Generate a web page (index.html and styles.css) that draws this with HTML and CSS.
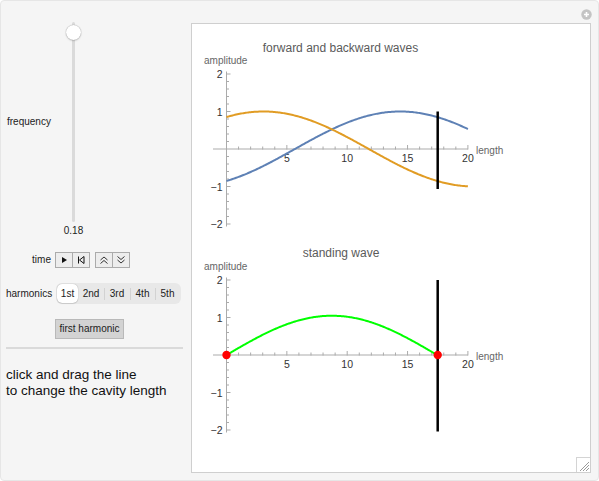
FILE: index.html
```html
<!DOCTYPE html>
<html>
<head>
<meta charset="utf-8">
<title>Standing waves</title>
<link rel="stylesheet" href="styles.css">
</head>
<body>
<div class="app">
  <div class="controls">
    <div class="slider-block">
      <div class="slider-label">frequency</div>
      <div class="track"><div class="thumb"></div></div>
      <div class="slider-value">0.18</div>
    </div>

    <div class="ctl-row time-row">
      <span class="ctl-label">time</span>
      <div class="btns">
        <div class="btn-group">
          <span class="tbtn"><svg width="16" height="14" viewBox="0 0 16 14"><polygon points="6,4 6,10 11,7" fill="#111"/></svg></span>
          <span class="tbtn"><svg width="16" height="14" viewBox="0 0 16 14"><line x1="5.5" y1="3.5" x2="5.5" y2="10.5" stroke="#111" stroke-width="1"/><polygon points="11,3.5 6.5,7 11,10.5" fill="none" stroke="#111" stroke-width="1"/></svg></span>
        </div>
        <div class="btn-group">
          <span class="tbtn"><svg width="16" height="14" viewBox="0 0 16 14"><polyline points="4.5,7 8,4 11.5,7" fill="none" stroke="#333" stroke-width="1"/><polyline points="4.5,10.5 8,7.5 11.5,10.5" fill="none" stroke="#333" stroke-width="1"/></svg></span>
          <span class="tbtn"><svg width="16" height="14" viewBox="0 0 16 14"><polyline points="4.5,3.5 8,6.5 11.5,3.5" fill="none" stroke="#333" stroke-width="1"/><polyline points="4.5,7 8,10 11.5,7" fill="none" stroke="#333" stroke-width="1"/></svg></span>
        </div>
      </div>
    </div>

    <div class="ctl-row harm-row">
      <span class="ctl-label">harmonics</span>
      <div class="seg">
        <span class="seg-item active w21">1st</span>
        <span class="seg-item w26">2nd</span>
        <span class="seg-item sepl w26">3rd</span>
        <span class="seg-item sepl w25">4th</span>
        <span class="seg-item sepl w25">5th</span>
      </div>
    </div>

    <div class="action-row"><span class="action">first harmonic</span></div>

    <div class="sep"></div>

    <p class="hint">click and drag the line<br>to change the cavity length</p>
  </div>

  <div class="plot-panel">
    <svg class="plot" width="398" height="448" viewBox="0 0 398 448">
      <!-- top plot -->
      <text class="title" x="148.5" y="23.5">forward and backward waves</text>
      <text class="axlabel" x="12" y="36">amplitude</text>
      <line class="axis" x1="21" y1="125" x2="276" y2="125"/>
      <line class="axis" x1="34.5" y1="47.5" x2="34.5" y2="202.5"/>
      <path id="ticks1" class="axis" d=""/>
      <text class="ylab" x="30.5" y="50">2</text>
      <text class="ylab" x="30.5" y="87.5">1</text>
      <text class="ylab" x="30.5" y="162.5">−1</text>
      <text class="ylab" x="30.5" y="200">−2</text>
      <text class="xlab" x="94.85" y="134">5</text>
      <text class="xlab" x="155.2" y="134">10</text>
      <text class="xlab" x="215.55" y="134">15</text>
      <text class="xlab" x="275.9" y="134">20</text>
      <text class="axlabel mid" x="284" y="126.5">length</text>
      <path id="blue" class="curve" stroke="#5e81b5" d=""/>
      <path id="orange" class="curve" stroke="#e19c24" d=""/>
      <line x1="245.7" y1="87.5" x2="245.7" y2="165" stroke="#000" stroke-width="2.5"/>

      <!-- bottom plot -->
      <text class="title" x="149" y="229">standing wave</text>
      <text class="axlabel" x="12" y="242">amplitude</text>
      <line class="axis" x1="21" y1="331" x2="276" y2="331"/>
      <line class="axis" x1="34.5" y1="253.5" x2="34.5" y2="408.5"/>
      <path id="ticks2" class="axis" d=""/>
      <text class="ylab" x="30.5" y="256">2</text>
      <text class="ylab" x="30.5" y="293.5">1</text>
      <text class="ylab" x="30.5" y="368.5">−1</text>
      <text class="ylab" x="30.5" y="406">−2</text>
      <text class="xlab" x="94.85" y="340">5</text>
      <text class="xlab" x="155.2" y="340">10</text>
      <text class="xlab" x="215.55" y="340">15</text>
      <text class="xlab" x="275.9" y="340">20</text>
      <text class="axlabel mid" x="284" y="332">length</text>
      <path id="green" class="curve" stroke="#00ff00" d=""/>
      <line x1="245.7" y1="256" x2="245.7" y2="407.5" stroke="#000" stroke-width="2.5"/>
      <circle cx="34.5" cy="331" r="4.2" fill="#ff0000"/>
      <circle cx="245.7" cy="331" r="4.2" fill="#ff0000"/>
    </svg>
    <div class="grip">
      <svg width="14" height="15" viewBox="0 0 14 15"><path d="M13 5 L4 14 M13 8 L7 14 M13 11 L10 14" stroke="#9a9a9a" stroke-width="1"/></svg>
    </div>
  </div>

  <div class="corner-btn">
    <svg width="11" height="11" viewBox="0 0 11 11"><circle cx="5.5" cy="5.5" r="5.2" fill="#c4c4c4"/><path d="M5.5 3 V8 M3 5.5 H8" stroke="#fff" stroke-width="1.6"/></svg>
  </div>
</div>
<script src="script.js"></script>
</body>
</html>
```

FILE: styles.css
```css
* { box-sizing: border-box; }
html, body { margin: 0; padding: 0; }
body {
  width: 599px;
  height: 481px;
  overflow: hidden;
  font-family: "Liberation Sans", Arial, sans-serif;
  color: #222;
  background: #ffffff;
}
.app {
  position: relative;
  width: 599px;
  height: 481px;
  background: #f5f5f5;
  border: 1px solid #e6e6e6;
  border-radius: 4px;
  display: flex;
  align-items: flex-start;
}
.controls {
  width: 190px;
  flex: none;
  padding: 21px 8px 0 5px;
  display: flex;
  flex-direction: column;
}
.slider-block {
  display: grid;
  grid-template-columns: 57px 21px;
  grid-template-rows: 200px auto;
}
.slider-label {
  grid-column: 1;
  grid-row: 1;
  align-self: center;
  padding-left: 1px;
  font-size: 10px;
  line-height: 12px;
  margin-top: 0;
}
.track {
  grid-column: 2;
  grid-row: 1;
  position: relative;
  width: 3px;
  height: 200px;
  justify-self: center;
  background: #dadada;
  border-radius: 2px;
}
.thumb {
  position: absolute;
  top: 3px;
  left: -6px;
  width: 15px;
  height: 15px;
  border-radius: 50%;
  background: #fff;
  box-shadow: 0 0 1px rgba(0,0,0,0.45), 0 1px 2px rgba(0,0,0,0.15);
}
.slider-value {
  grid-column: 2;
  grid-row: 2;
  justify-self: center;
  white-space: nowrap;
  font-size: 10px;
  line-height: 12px;
  margin-top: 3px;
}
.ctl-row {
  display: grid;
  grid-template-columns: 45px auto;
  align-items: center;
}
.ctl-label {
  text-align: right;
  font-size: 10px;
  line-height: 12px;
  white-space: nowrap;
}
.time-row {
  margin-top: 15px;
  column-gap: 4px;
  height: 16px;
}
.btns {
  display: flex;
  gap: 5px;
}
.btn-group {
  display: flex;
  border: 1px solid #ababab;
  background: #ededed;
}
.tbtn {
  display: block;
  width: 16px;
  height: 14px;
}
.tbtn + .tbtn { border-left: 1px solid #ababab; width: 17px; }
.tbtn svg { display: block; }
.harm-row {
  margin-top: 15px;
  column-gap: 5px;
  height: 21px;
}
.seg {
  display: flex;
  width: 125px;
  height: 21px;
  padding: 1px;
  background: #e8e8e8;
  border-radius: 6px;
}
.seg-item {
  height: 19px;
  line-height: 19px;
  text-align: center;
  font-size: 10px;
  color: #222;
}
.w21 { width: 21px; }
.w26 { width: 26px; }
.w25 { width: 25px; }
.seg-item.active {
  background: #fff;
  border-radius: 5px;
  box-shadow: 0 0 1px rgba(0,0,0,0.35), 0 1px 1px rgba(0,0,0,0.1);
}
.seg-item.sepl {
  background: linear-gradient(#d2d2d2, #d2d2d2) left center / 1px 12px no-repeat;
}
.action-row {
  margin-top: 15px;
  padding-left: 49px;
}
.action {
  display: block;
  width: 69px;
  height: 20px;
  line-height: 18px;
  text-align: center;
  font-size: 10px;
  color: #222;
  background: #d3d3d3;
  border: 1px solid #b9b9b9;
}
.sep {
  margin-top: 8px;
  width: 177px;
  height: 2px;
  background: #dadada;
}
.hint {
  margin: 18px 0 0 0;
  font-size: 13.5px;
  line-height: 16px;
  color: #111;
}
.plot-panel {
  position: relative;
  flex: none;
  margin-top: 22px;
  width: 400px;
  height: 450px;
  background: #fff;
  border: 1px solid #cfcfcf;
}
.plot { display: block; }
.plot text { font-family: "Liberation Sans", Arial, sans-serif; }
.title { font-size: 12px; fill: #5a5a5a; text-anchor: middle; dominant-baseline: central; }
.axlabel { font-size: 10px; fill: #666; dominant-baseline: central; }
.ylab { font-size: 10.5px; fill: #333; text-anchor: end; dominant-baseline: central; }
.xlab { font-size: 10.5px; fill: #333; text-anchor: middle; dominant-baseline: central; }
.axis { stroke: #ababab; stroke-width: 1; fill: none; }
.curve { fill: none; stroke-width: 2; stroke-linejoin: round; }
.grip {
  position: absolute;
  right: 0;
  bottom: 0;
  width: 14px;
  height: 15px;
  border-left: 1px solid #d4d4d4;
  border-top: 1px solid #d4d4d4;
}
.grip svg { display: block; position: absolute; right: 0; bottom: 0; }
.corner-btn {
  position: absolute;
  left: 580px;
  top: 8px;
  width: 11px;
  height: 11px;
}
.corner-btn svg { display: block; }
```

FILE: script.js
```js
(function () {
  var k = 0.18, th = 1.02, L = 17.5;
  var X0 = 34.5, SX = 12.07, SY = 37.5;
  function X(x) { return X0 + SX * x; }
  function path(f, y0, a, b) {
    var d = '';
    for (var i = 0; i <= 200; i++) {
      var x = a + (b - a) * i / 200;
      d += (i ? 'L' : 'M') + X(x).toFixed(2) + ' ' + (y0 - SY * f(x)).toFixed(2);
    }
    return d;
  }
  function set(id, d) { document.getElementById(id).setAttribute('d', d); }
  set('blue', path(function (x) { return Math.sin(k * x - th); }, 125, 0, 20));
  set('orange', path(function (x) { return Math.sin(k * x + th); }, 125, 0, 20));
  set('green', path(function (x) { return 2 * Math.cos(th) * Math.sin(k * x); }, 331, 0, L));
  function ticks(y0) {
    var d = '';
    for (var i = 1; i <= 20; i++) {
      var len = (i % 5 === 0) ? 4 : 2.5;
      d += 'M' + X(i).toFixed(2) + ' ' + (y0 + 0.5) + 'v' + (-len - 0.5);
    }
    for (var j = -10; j <= 10; j++) {
      if (j === 0) continue;
      var len2 = (j % 5 === 0) ? 4 : 2.5;
      var y = y0 - SY * j / 5;
      d += 'M' + (X0 - 0.5) + ' ' + y.toFixed(2) + 'h' + (len2 + 0.5);
    }
    return d;
  }
  set('ticks1', ticks(125));
  set('ticks2', ticks(331));
})();
```
